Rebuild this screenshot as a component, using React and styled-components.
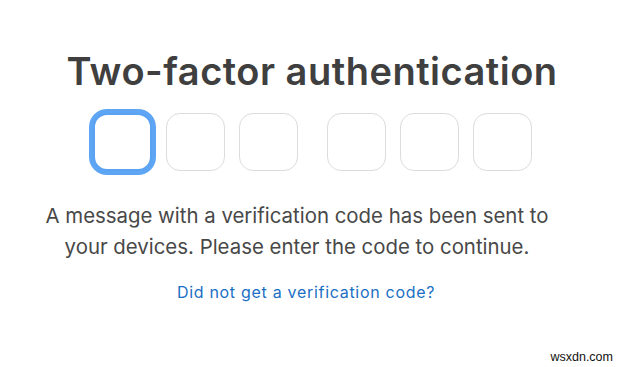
import React from "react";
import styled, { createGlobalStyle } from "styled-components";

const GlobalStyle = createGlobalStyle`
  html, body {
    margin: 0;
    padding: 0;
    background: #fff;
  }
  body {
    font-family: Inter, "Noto Sans", sans-serif;
  }
`;

const Page = styled.div`
  position: relative;
  width: 624px;
  height: 367px;
  display: flex;
  flex-direction: column;
  align-items: center;
  padding-top: 47px;
  box-sizing: border-box;
`;

const Title = styled.h1`
  margin: 0;
  font-size: 38px;
  font-weight: 600;
  color: #3f3f3f;
  letter-spacing: 0.5px;
  line-height: 48px;
`;

const CodeRow = styled.div`
  display: flex;
  gap: 29px;
  margin-top: 18px;
`;

const Group = styled.div`
  display: flex;
  gap: 14px;
`;

const Digit = styled.div`
  width: 59px;
  height: 58px;
  box-sizing: border-box;
  border-radius: 14px;
  border: ${({ $focused }) => ($focused ? "2px solid #5aa2f2" : "1.5px solid #dcdcdc")};
  box-shadow: ${({ $focused }) => ($focused ? "0 0 0 4px #5ea6f4" : "none")};
  background: #fff;
`;

const Message = styled.p`
  margin: 29px 0 0;
  padding-right: 30px;
  font-size: 20.4px;
  line-height: 31px;
  color: #484848;
  text-align: center;
`;

const Link = styled.a`
  margin-top: 20px;
  padding-right: 12px;
  font-size: 16px;
  color: #1a6fc4;
  text-decoration: none;
  letter-spacing: 0.7px;
`;

const Watermark = styled.span`
  position: absolute;
  right: 11px;
  bottom: 3px;
  font-family: "Liberation Sans", Arial, sans-serif;
  font-size: 12.5px;
  color: #111;
`;

const App = () => {
  return (
    <>
      <GlobalStyle />
      <Page>
        <Title>Two-factor authentication</Title>
        <CodeRow>
          <Group>
            <Digit $focused />
            <Digit />
            <Digit />
          </Group>
          <Group>
            <Digit />
            <Digit />
            <Digit />
          </Group>
        </CodeRow>
        <Message>
          A message with a verification code has been sent to
          <br />
          your devices. Please enter the code to continue.
        </Message>
        <Link href="#">Did not get a verification code?</Link>
        <Watermark>wsxdn.com</Watermark>
      </Page>
    </>
  );
};

export default App;
